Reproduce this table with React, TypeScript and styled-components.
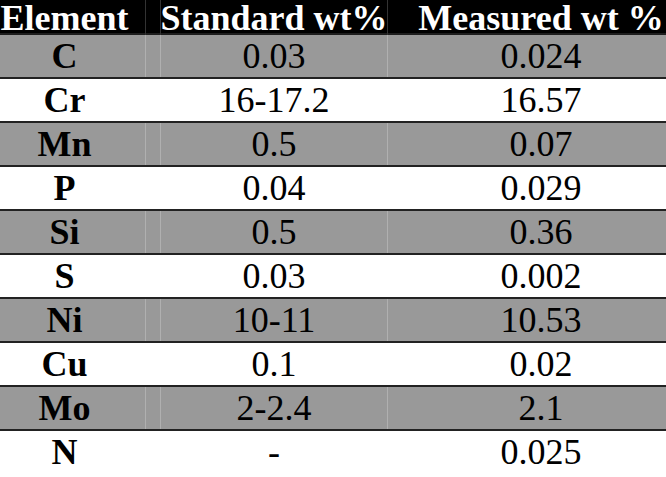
import React from "react"
import styled, { createGlobalStyle } from "styled-components"

const GlobalStyle = createGlobalStyle`
  html, body {
    margin: 0;
    padding: 0;
    background: #ffffff;
    overflow: hidden;
  }
`

const Table = styled.div`
  width: 666px;
  height: 477px;
  display: flex;
  flex-direction: column;
  overflow: hidden;
  font-family: "Liberation Serif", "Times New Roman", serif;
`

const HeaderRow = styled.div`
  display: grid;
  grid-template-columns: 145px 15px 227px 1fr;
  height: 33px;
  flex-shrink: 0;
  background: #000000;
  border-bottom: 2px solid #1e1e1e;
  color: #ffffff;
  font-size: 36px;
`

const Row = styled.div<{ $shaded: boolean }>`
  display: grid;
  grid-template-columns: 145px 15px 227px 1fr;
  height: 42px;
  flex-shrink: 0;
  background: ${(p) => (p.$shaded ? "#999999" : "#ffffff")};
  border-bottom: 2.5px solid #222222;
  color: #000000;
  font-size: 36px;

  &:last-child {
    border-bottom: none;
  }
`

const Cell = styled.div<{ $line?: string; $padLeft?: number; $padRight?: number; $bold?: boolean }>`
  box-sizing: border-box;
  display: flex;
  align-items: center;
  justify-content: center;
  white-space: nowrap;
  line-height: 1;
  border-left: ${(p) => (p.$line ? `1px solid ${p.$line}` : "none")};
  padding-left: ${(p) => p.$padLeft ?? 0}px;
  padding-right: ${(p) => p.$padRight ?? 0}px;
  font-weight: ${(p) => (p.$bold ? "bold" : "normal")};
`

const HeadCell = styled(Cell)`
  align-items: flex-end;
  margin-bottom: -1px;
`

const rows = [
  ["C", "0.03", "0.024"],
  ["Cr", "16-17.2", "16.57"],
  ["Mn", "0.5", "0.07"],
  ["P", "0.04", "0.029"],
  ["Si", "0.5", "0.36"],
  ["S", "0.03", "0.002"],
  ["Ni", "10-11", "10.53"],
  ["Cu", "0.1", "0.02"],
  ["Mo", "2-2.4", "2.1"],
  ["N", "-", "0.025"],
]

export default function App() {
  return (
    <>
      <GlobalStyle />
      <Table>
        <HeaderRow>
          <HeadCell $bold $padRight={16}>Element</HeadCell>
          <HeadCell $line="#333333" />
          <HeadCell $bold $line="#333333">Standard wt%</HeadCell>
          <HeadCell $bold $line="#333333" $padLeft={28}>
            Measured wt %
          </HeadCell>
        </HeaderRow>
        {rows.map(([el, std, meas], i) => (
          <Row key={el} $shaded={i % 2 === 0}>
            <Cell $bold $padRight={16}>
              {el}
            </Cell>
            <Cell $line={i % 2 === 0 ? "#b0b0b0" : "#ffffff"} />
            <Cell $line={i % 2 === 0 ? "#b0b0b0" : "#ffffff"}>{std}</Cell>
            <Cell $line={i % 2 === 0 ? "#b0b0b0" : "#ffffff"} $padLeft={28}>
              {meas}
            </Cell>
          </Row>
        ))}
      </Table>
    </>
  )
}
